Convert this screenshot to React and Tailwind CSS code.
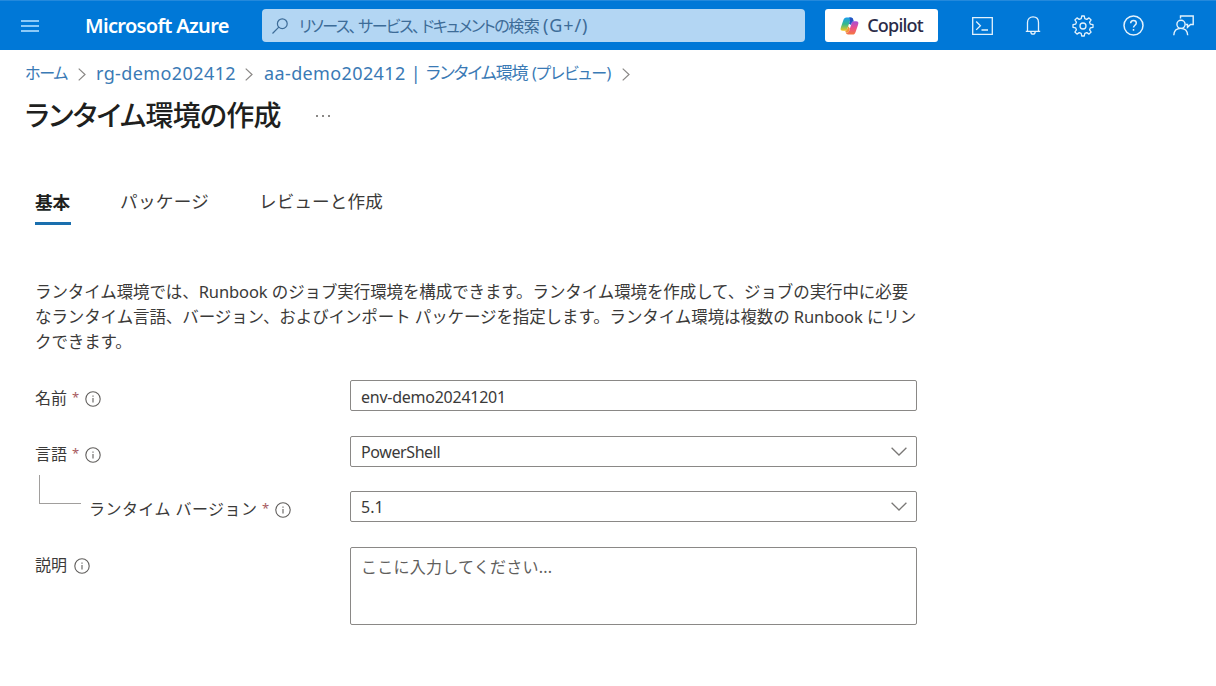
import React, { useState } from 'react';

const InfoIcon = () => (
  <svg className="w-4 h-4 shrink-0" viewBox="0 0 16 16" fill="none" stroke="#605e5c" strokeWidth="1.1">
    <circle cx="8" cy="8" r="7.2" />
    <path d="M8 6.9v4.6" />
    <path d="M8 4.4v1.3" />
  </svg>
);

const Chevron = () => (
  <svg className="w-4 h-[9px] shrink-0" viewBox="0 0 16 9" fill="none" stroke="#7a7876" strokeWidth="1.3">
    <path d="M.6 .8L8 8L15.4 .8" />
  </svg>
);

const CrumbArrow = () => (
  <svg className="w-2 h-[13px] shrink-0 mt-0.5" viewBox="0 0 8 13" fill="none" stroke="#8a8886" strokeWidth="1.2">
    <path d="M.7 .6L7 6.5L.7 12.4" />
  </svg>
);

const CopilotIcon = () => (
  <svg className="w-[19px] h-[18px] shrink-0" viewBox="0 0 19 17">
    <defs>
      <linearGradient id="cpA" x1="0" y1="0" x2="0" y2="1">
        <stop offset="0" stopColor="#1a9df0" />
        <stop offset=".5" stopColor="#35b98c" />
        <stop offset="1" stopColor="#f3c81d" />
      </linearGradient>
      <linearGradient id="cpB" x1="0" y1="1" x2="0" y2="0">
        <stop offset="0" stopColor="#f5783e" />
        <stop offset=".5" stopColor="#ec4f8b" />
        <stop offset="1" stopColor="#a54fd8" />
      </linearGradient>
    </defs>
    <path d="M13.2 2C12.9.8 12.1 0 10.9 0H6.4C4.8 0 3.9 1 3.4 2.6L1 9.4C.1 12 .6 13.2 3 13.2H5.2C6.3 13.2 7 12.5 7.4 11.3L9.7 4.1C10.1 2.7 10.9 2 12 2Z" fill="url(#cpA)" />
    <path d="M5.8 15C6.1 16.2 6.9 17 8.1 17H12.6C14.2 17 15.1 16 15.6 14.4L18 7.6C18.9 5 18.4 3.8 16 3.8H13.8C12.7 3.8 12 4.5 11.6 5.7L9.3 12.9C8.9 14.3 8.1 15 7 15Z" fill="url(#cpB)" />
    <path d="M9 0H10.9C12.1 0 12.9.8 13.2 2L13.8 3.8C12.7 3.8 12 4.5 11.6 5.7L11 7.5L9 6.3L9.7 4.1C10.1 2.7 10.3 1.6 9 0Z" fill="#2753c4" />
    <path d="M5.2 13.2C6.3 13.2 7 12.5 7.4 11.3L8.2 8.8L9.9 11L9.3 12.9C8.9 14.3 8.1 15 7 15H5.8Z" fill="#f2953a" />
  </svg>
);

const HeaderIcons = () => (
  <div className="flex items-center text-[#e4f2fc]">
    <svg className="w-[21px] h-[18px]" viewBox="0 0 21 18" fill="none" stroke="currentColor" strokeWidth="1.3">
      <path d="M.7 .7H20.3V17.3H.7Z" />
      <path d="M4.2 4.5L8.4 8.7L4.2 12.9M9.5 13H16" />
    </svg>
    <svg className="w-4 h-[19px] ml-[32px]" viewBox="0 0 16 19" fill="none" stroke="currentColor" strokeWidth="1.3">
      <path d="M.8 15.3H15.2M2.5 15.3V6.5C2.5 3 4.8 .8 8 .8S13.5 3 13.5 6.5V15.3M5.8 15.5C5.8 17.2 6.6 18.2 8 18.2S10.2 17.2 10.2 15.5" />
    </svg>
    <svg className="w-[22px] h-[22px] ml-[31px]" viewBox="0 0 22 22" fill="none" stroke="currentColor" strokeWidth="1.3" strokeLinejoin="round">
      <path d="M9.7 1H12.3L12.8 3.6L14.8 4.4L17 2.9L19.1 5L17.6 7.2L18.4 9.2L21 9.7V12.3L18.4 12.8L17.6 14.8L19.1 17L17 19.1L14.8 17.6L12.8 18.4L12.3 21H9.7L9.2 18.4L7.2 17.6L5 19.1L2.9 17L4.4 14.8L3.6 12.8L1 12.3V9.7L3.6 9.2L4.4 7.2L2.9 5L5 2.9L7.2 4.4L9.2 3.6Z" />
      <circle cx="11" cy="11" r="3" />
    </svg>
    <svg className="w-[21px] h-[21px] ml-[29px]" viewBox="0 0 21 21" fill="none" stroke="currentColor" strokeWidth="1.5">
      <circle cx="10.5" cy="10.5" r="9.5" />
      <path d="M7.7 8.2C7.7 6.5 8.9 5.4 10.5 5.4S13.3 6.4 13.3 8C13.3 10.2 10.5 10.3 10.5 12.6M10.5 14V15.7" />
    </svg>
    <svg className="w-[21px] h-[21px] ml-[29px]" viewBox="0 0 21 21" fill="none" stroke="currentColor" strokeWidth="1.4">
      <path d="M7.5 3.6V1H20.2V9.5H17.5L14.5 12.3V9.5H12.6" />
      <circle cx="8" cy="9.3" r="4.1" />
      <path d="M.8 20.2C1 16 3.7 13.4 7.7 13.4S14.4 16 14.7 20.2" />
    </svg>
  </div>
);

const Label = ({ text, width, required, indent }) => (
  <div className={indent ? 'flex w-[260px] shrink-0 items-center pt-1' : 'flex w-[315px] shrink-0 items-center pt-1'}>
    <span className={width}>{text}</span>
    {required && <span className="ml-1 mr-[6px] text-[13px] leading-none text-[#a65a5e]">*</span>}
    <span className={required ? 'pt-0.5' : 'ml-1.5 pt-0.5'}><InfoIcon /></span>
  </div>
);

const App = () => {
  const [name, setName] = useState('env-demo20241201');
  const [description, setDescription] = useState('');

  return (
    <div className="h-[686px] w-[1216px] overflow-hidden bg-white whitespace-nowrap text-[#3b3a39] font-['Noto_Sans','Noto_Sans_CJK_JP',sans-serif]">
      {/* Top bar */}
      <header className="flex h-[50px] items-center bg-[#0078d7] border-t border-[#2389dc]">
        <button className="ml-[21px] flex w-[18px] flex-col gap-[3px]">
          <span className="h-0.5 w-full bg-[#8ccaf8]"></span>
          <span className="h-0.5 w-full bg-[#8ccaf8]"></span>
          <span className="h-0.5 w-full bg-[#8ccaf8]"></span>
        </button>
        <div className="ml-[46px] w-[177px] text-[20px] font-semibold tracking-[-0.66px] text-white">Microsoft Azure</div>
        <div className="flex h-[33px] w-[543px] items-center rounded-sm bg-[#b3d6f3] pl-2.5 text-[#3d6c98]">
          <svg className="h-4 w-4" viewBox="0 0 16 16" fill="none" stroke="currentColor" strokeWidth="1.2">
            <circle cx="10.3" cy="5.7" r="4.9" />
            <path d="M6.8 9.2L.5 15.5" />
          </svg>
          <span className="ml-[11px] w-[244px] text-[16px] tracking-[-1.5px] [font-feature-settings:'palt']">
            リソース<span className="tracking-[1.5px]">、</span>サービス<span className="tracking-[1.5px]">、</span>ドキュメントの<span className="tracking-[-0.5px]">検索</span>
          </span>
          <span className="text-[18px] tracking-[0.9px]">(G+/)</span>
        </div>
        <button className="ml-5 mr-[34px] flex h-[33px] w-[113px] items-center justify-center gap-2 rounded-[3px] bg-white text-[18px] text-[#2b2b48]">
          <CopilotIcon />
          <span className="font-medium tracking-[-0.8px]">Copilot</span>
        </button>
        <HeaderIcons />
      </header>

      {/* Breadcrumb */}
      <nav className="mt-2.5 ml-[25px] flex h-[26px] items-center text-[18px] text-[#3a7ab5]">
        <span className="w-[44px] text-[16px] tracking-[-1.2px] [font-feature-settings:'palt']">ホーム</span>
        <span className="w-[27px] pl-[9px]"><CrumbArrow /></span>
        <span className="w-[140px] tracking-[0.4px]">rg-demo202412</span>
        <span className="w-[28px] pl-[9px]"><CrumbArrow /></span>
        <span className="w-[162px] tracking-[0.38px]">aa-demo202412 |</span>
        <span className="w-[106px] text-[17px] tracking-[-1.1px] [font-feature-settings:'palt']">ランタイム環境</span>
        <span className="w-[81px] text-[16px] tracking-[-0.5px] [font-feature-settings:'palt']">(プレビュー)</span>
        <span className="pl-[9px]"><CrumbArrow /></span>
      </nav>

      <div className="mt-2 ml-[25px] flex h-[42px] items-center">
        <h1 className="w-[291px] text-[28px] font-medium tracking-[-0.7px] text-[#201f1e] [font-feature-settings:'palt']">ランタイム環境の作成</h1>
        <div className="mt-0.5 flex gap-1">
          <span className="h-0.5 w-0.5 bg-[#8a8886]"></span>
          <span className="h-0.5 w-0.5 bg-[#8a8886]"></span>
          <span className="h-0.5 w-0.5 bg-[#8a8886]"></span>
        </div>
      </div>

      {/* Tabs */}
      <div className="mt-[51px] ml-[35px] flex h-[39px] text-[17.6px] leading-[28px]">
        <div className="mr-[49px] h-[38px] w-[36px] border-b-3 border-[#1a6fae] leading-[30px] font-bold text-[#201f1e]">基本</div>
        <div className="w-[139px] tracking-[0.3px]">パッケージ</div>
        <div className="tracking-[0.1px]">レビューと作成</div>
      </div>

      {/* Description */}
      <p className="mt-[53px] ml-[35px] text-[16.5px] leading-[25px] tracking-[-0.1px]">
        ランタイム環境では、Runbook のジョブ実行環境を構成できます。ランタイム環境を作成して、ジョブの実行中に必要<br />
        なランタイム言語、バージョン、およびインポート パッケージを指定します。ランタイム環境は複数の Runbook にリン<br />
        クできます。
      </p>

      {/* Form */}
      <div className="mt-[26px] ml-[35px] flex w-[882px] flex-col text-[16px]">
        <div className="flex h-[31px] items-center">
          <Label text="名前" width="w-[33px]" required />
          <input
            value={name}
            onChange={(e) => setName(e.target.value)}
            className="h-[31px] w-[567px] rounded-[2px] border border-[#8a8886] px-2.5 pt-0.5 text-[16px] tracking-[-0.25px] outline-none"
          />
        </div>
        <div className="mt-[25px] flex h-[31px] items-center">
          <Label text="言語" width="w-[33px]" required />
          <button className="flex h-[31px] w-[567px] items-center justify-between rounded-[2px] border border-[#8a8886] pr-[9px] pl-2.5">
            <span className="tracking-[-0.4px]">PowerShell</span>
            <Chevron />
          </button>
        </div>
        <div className="mt-[8px] flex h-[47px]">
          <div className="ml-1 mr-[8px] h-[29px] w-[42px] border-b border-l border-[#a19f9d]"></div>
          <div className="flex h-[31px] w-[828px] items-center self-end">
            <Label text={<span className="tracking-[0.45px]">ランタイム バージョン</span>} width="w-[169px]" required indent />
            <button className="ml-px flex h-[31px] w-[567px] items-center justify-between rounded-[2px] border border-[#8a8886] pr-[9px] pl-2.5">
              <span>5.1</span>
              <Chevron />
            </button>
          </div>
        </div>
        <div className="mt-[25px] flex">
          <div className="h-[31px] pt-0.5">
            <Label text="説明" width="w-[33px]" />
          </div>
          <textarea
            value={description}
            onChange={(e) => setDescription(e.target.value)}
            placeholder="ここに入力してください..."
            className="h-[78px] w-[567px] resize-none rounded-[2px] border border-[#8a8886] px-2.5 py-[7px] text-[16px] tracking-[0.25px] outline-none placeholder:text-[#605e5c]"
          />
        </div>
      </div>
    </div>
  );
};

export default App;
